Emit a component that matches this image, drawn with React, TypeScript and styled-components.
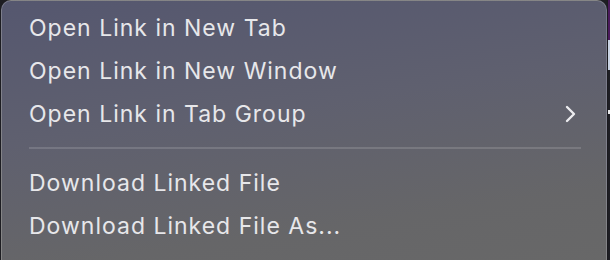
import styled, { createGlobalStyle } from "styled-components";

const GlobalStyle = createGlobalStyle`
  html, body {
    margin: 0;
    padding: 0;
    background: #1d1d22;
    overflow: hidden;
  }
`;

const Screen = styled.div`
  display: flex;
  width: 610px;
  height: 260px;
  overflow: hidden;
`;

const Menu = styled.div`
  box-sizing: border-box;
  width: 606px;
  height: 280px;
  margin-left: 1px;
  padding-top: 5px;
  border: 1px solid rgba(255, 255, 255, 0.2);
  border-bottom: none;
  border-radius: 10px 10px 0 0;
  background: linear-gradient(172deg, #55576f 0%, #5f606f 40%, #666668 75%, #686868 100%);
  font-family: Inter, "Noto Sans", sans-serif;
  color: #e7e7ea;
`;

const Item = styled.div`
  display: flex;
  align-items: center;
  justify-content: space-between;
  height: 43px;
  padding: 0 29px 0 27px;
  font-size: 23px;
  letter-spacing: 1px;
`;

const Separator = styled.div`
  height: 2px;
  margin: 12px 25px 12px 27px;
  background: rgba(255, 255, 255, 0.14);
`;

const Behind = styled.div`
  display: flex;
  flex-direction: column;
  flex: 1;
  border-left: 1px solid #1a1a1e;
`;

const Strip = styled.div<{ $color: string; $h: number }>`
  height: ${(p) => p.$h}px;
  background: ${(p) => p.$color};
`;

function Chevron() {
  return (
    <svg width="12" height="18" viewBox="0 0 12 18" fill="none">
      <polyline
        points="2,2 9,9 2,16"
        stroke="#ececef"
        strokeWidth="2.4"
        strokeLinecap="round"
        strokeLinejoin="round"
      />
    </svg>
  );
}

export default function App() {
  return (
    <>
      <GlobalStyle />
      <Screen>
        <Menu>
          <Item>Open Link in New Tab</Item>
          <Item>Open Link in New Window</Item>
          <Item>
            Open Link in Tab Group
            <Chevron />
          </Item>
          <Separator />
          <Item>Download Linked File</Item>
          <Item>Download Linked File As...</Item>
        </Menu>
        <Behind>
          <Strip $color="#4b1a5c" $h={40} />
          <Strip $color="#c9d3e3" $h={30} />
          <Strip $color="#1e1e24" $h={40} />
          <Strip $color="#e8e8ea" $h={4} />
          <Strip $color="#1e1e24" $h={146} />
        </Behind>
      </Screen>
    </>
  );
}
